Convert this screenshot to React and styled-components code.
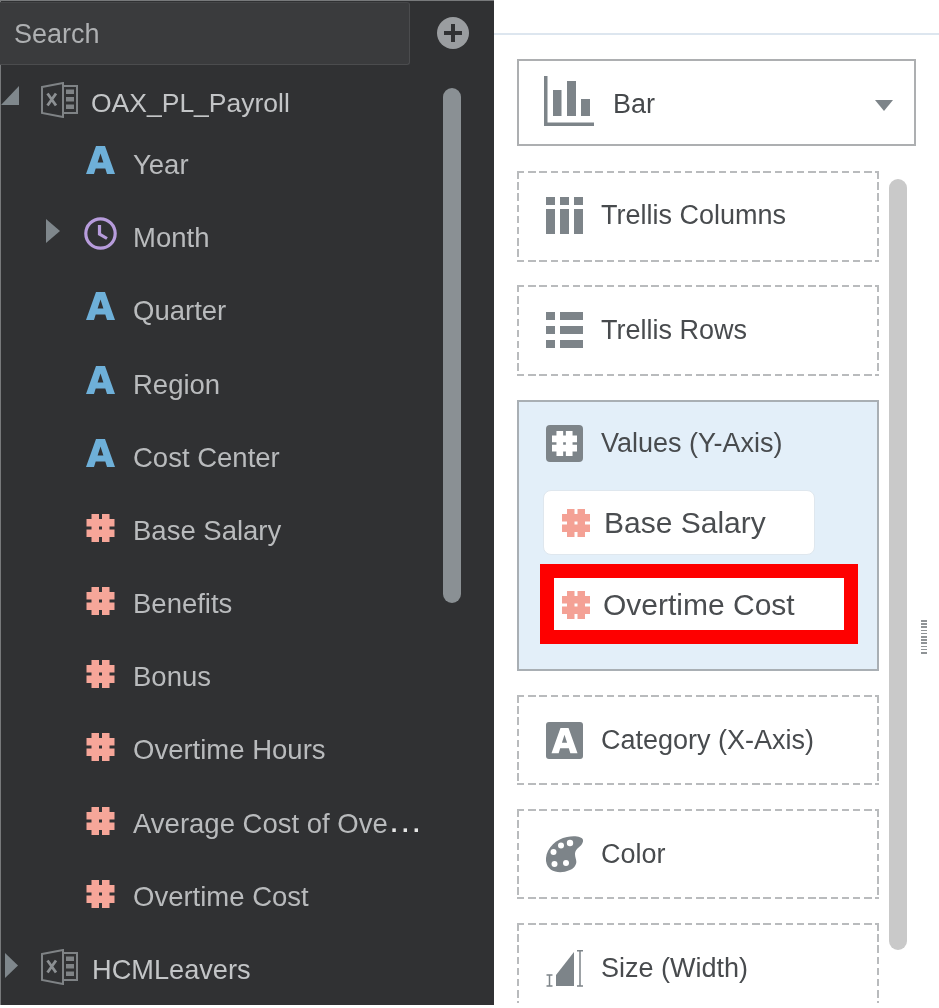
import React from "react";
import styled, { createGlobalStyle, css } from "styled-components";

const Global = createGlobalStyle`
  html, body { margin: 0; padding: 0; background: #fff; height: 100%; overflow: hidden; }
  #root { height: 100%; }
  * { box-sizing: border-box; }
`;

const Page = styled.div`
  display: flex;
  width: 939px;
  height: 1005px;
  overflow: hidden;
  background: #fff;
  font-family: "Liberation Sans", Arial, sans-serif;
  filter: blur(0.55px);
`;

/* ---------- left panel ---------- */
const DataPanel = styled.aside`
  position: relative;
  flex: 0 0 494px;
  background: #303133;
  border-top: 1px solid #77797b;
  border-left: 1px solid #77797b;
`;
const SearchRow = styled.div`
  display: flex;
  align-items: center;
  height: 63px;
  margin-top: 1px;
`;
const SearchBox = styled.div`
  flex: 0 0 410px;
  height: 63px;
  margin-left: -1px;
  padding: 2px 0 0 14px;
  display: flex;
  align-items: center;
  background: #3a3b3d;
  border: 1px solid #4b4c4e;
  border-left: 0;
  border-top-color: #444547;
  border-radius: 0 3px 3px 0;
  color: #aeb0b2;
  font-size: 27px;
`;
const AddButton = styled.svg`
  width: 32px;
  height: 32px;
  margin-left: 27px;
  margin-top: -2px;
`;
const Tree = styled.div`
  padding-top: 14.6px;
`;
const SourceRow = styled.div`
  display: flex;
  align-items: center;
  height: ${p => p.$h}px;
  padding-left: ${p => p.$inset}px;
  color: #c3c5c7;
  font-size: ${p => p.$size}px;
`;
const FieldRow = styled.div`
  display: flex;
  align-items: center;
  height: 73.2px;
  padding-left: 45px;
  color: #b9bbbd;
  font-size: 27.5px;
`;
const ToggleSlot = styled.div`
  flex: 0 0 ${p => p.$w}px;
  display: flex;
  align-items: center;
  margin-bottom: ${p => p.$lift || 0}px;
`;
const Toggle = styled.svg`
  display: block;
  fill: #7f878c;
`;
const SourceIcon = styled.svg`
  flex: 0 0 37px;
  height: 36px;
  margin-right: ${p => p.$gap}px;
  margin-bottom: 7px;
`;
const AttributeIcon = styled.svg`
  flex: 0 0 29px;
  height: 28px;
  margin-right: 18px;
  margin-bottom: 10px;
`;
const TimeIcon = styled.svg`
  flex: 0 0 33px;
  height: 33px;
  margin: 0 16px 10px -2px;
`;
const MeasureIcon = styled.svg`
  flex: 0 0 29px;
  height: 28px;
  margin-right: 18px;
  margin-bottom: 6px;
`;
const Dots = styled.span`
  letter-spacing: 4.5px;
  color: #e6e6e6;
  font-weight: 700;
  font-size: 24px;
  margin-left: 3px;
`;
const DarkScroll = styled.div`
  position: absolute;
  left: 442px;
  top: 87px;
  width: 18px;
  height: 515px;
  border-radius: 9px;
  background: #8a9094;
`;

/* ---------- right panel ---------- */
const BuilderPanel = styled.main`
  position: relative;
  flex: 1;
  overflow: hidden;
  height: 1003px;
`;
const TopBar = styled.div`
  height: 35px;
  border-bottom: 2px solid #dde6ef;
`;
const Builder = styled.div`
  padding: 24px 0 0 23px;
`;
const ChartSelect = styled.div`
  display: flex;
  align-items: center;
  width: 399px;
  height: 87px;
  padding: 0 21px 0 25px;
  border: 2px solid #adafb1;
  color: #45484b;
  font-size: 27px;
`;
const BarGlyph = styled.svg`
  flex: none;
  margin-bottom: 3px;
`;
const ChartName = styled.span`
  flex: 1;
  margin: 4px 0 0 19px;
`;
const Caret = styled.svg`
  flex: none;
  margin-top: 6px;
`;
const Wells = styled.div`
  display: flex;
  flex-direction: column;
  width: 362px;
  margin-top: 25px;
`;
const DASH = "#b9bbbd";
const dashed = css`
  background-image:
    repeating-linear-gradient(to right, ${DASH} 0 7.5px, transparent 7.5px 11.2px),
    repeating-linear-gradient(to right, ${DASH} 0 7.5px, transparent 7.5px 11.2px),
    repeating-linear-gradient(to bottom, ${DASH} 0 7.5px, transparent 7.5px 11.2px),
    repeating-linear-gradient(to bottom, ${DASH} 0 7.5px, transparent 7.5px 11.2px);
  background-size: 100% 2px, 100% 2px, 2px 100%, 2px 100%;
  background-position: 0 0, 0 100%, 0 0, 100% 0;
  background-repeat: no-repeat;
`;
const Well = styled.section`
  ${dashed}
  height: ${p => p.$h}px;
  margin-bottom: ${p => p.$gap}px;
  flex: none;
  padding: 0 0 ${p => p.$nudge || 0}px 29px;
  display: flex;
  align-items: center;
  color: #484b4e;
  font-size: 27px;
`;
const ValuesWell = styled.section`
  flex: none;
  height: 271px;
  margin-bottom: 24px;
  background: #e3eff9;
  border: 2px solid #a9afb4;
  padding: 0 0 0 21px;
  color: #484b4e;
  font-size: 27px;
`;
const WellHeader = styled.div`
  display: flex;
  align-items: center;
  height: 88px;
  padding: 0 0 6px 6px;
`;
const WellIcon = styled.svg`
  flex: 0 0 37px;
  height: 37px;
  margin-right: 18px;
`;
const Pill = styled.div`
  display: flex;
  align-items: center;
  background: #fff;
  color: #4a4d50;
  font-size: 30px;
  width: ${p => (p.$marked ? 318 : 272)}px;
  height: ${p => (p.$marked ? 80 : 65)}px;
  margin-left: ${p => (p.$marked ? 0 : 3)}px;
  margin-bottom: 9px;
  padding: ${p => (p.$marked ? "2px 0 0 8px" : "0 0 0 18px")};
  border-radius: ${p => (p.$marked ? 0 : 8)}px;
  border: ${p => (p.$marked ? "14px solid #fe0000" : "1px solid #dfe7ee")};
`;
const PillIcon = styled.svg`
  flex: 0 0 28px;
  height: 28px;
  margin-right: ${p => (p.$marked ? 13 : 14)}px;
`;
const LightScroll = styled.div`
  position: absolute;
  left: 395px;
  top: 179px;
  width: 18px;
  height: 771px;
  border-radius: 9px;
  background: #c9c9c9;
`;
const Splitter = styled.div`
  position: absolute;
  left: 427px;
  top: 620px;
  width: 6px;
  height: 35px;
  background: repeating-linear-gradient(to bottom, #8f9396 0 1.5px, transparent 1.5px 3.2px);
`;

/* ---------- icons ---------- */
const SLATE = "#7d8489";
const HASH =
  "M5 0h7.500v5h3V0H23v5h5v7.500h-5v3h5V23h-5v5h-7.500v-5h-3v5H5v-5H0v-7.500h5v-3H0V5h5zM12.500 12.500v3h3v-3z";
const A_MARK = "M10 0h9l10 28h-8l-1.700-5.500H9.700L8 28H0zM14.500 7.500L11.600 16.500h5.800z";

const Hash = ({ as: As = MeasureIcon, color = "#f6a699", ...rest }) => (
  <As viewBox="0 0 28 28" {...rest}>
    <path fill={color} fillRule="evenodd" d={HASH} />
  </As>
);

const LetterA = () => (
  <AttributeIcon viewBox="0 0 29 28">
    <path fill="#6eb0d9" fillRule="evenodd" d={A_MARK} />
  </AttributeIcon>
);

const Clock = () => (
  <TimeIcon viewBox="0 0 33 33">
    <circle cx="16.500" cy="16.500" r="14.700" fill="none" stroke="#b79cdc" strokeWidth="3.200" />
    <path d="M15.500 8v9l7.500 4.500" fill="none" stroke="#b79cdc" strokeWidth="3.200" />
  </TimeIcon>
);

const Excel = ({ gap }) => (
  <SourceIcon $gap={gap} viewBox="0 0 37 36">
    <g fill="none" stroke="#7f8386" strokeWidth="2">
      <path d="M1 5 L22 1 V35 L1 31 Z" />
      <path d="M22 4h14v27H22" />
    </g>
    <path d="M6.500 11.500 L15 23.500 M15 11.500 L6.500 23.500" stroke="#8c9093" strokeWidth="2.800" fill="none" />
    <path d="M25 7.500h8v4.500h-8zM25 15h8v4.500h-8zM25 22.500h8V27h-8z" fill="#7f8386" />
  </SourceIcon>
);

const Collapsed = ({ w = 14, h = 24 }) => (
  <Toggle width={w} height={h} viewBox="0 0 14 24" preserveAspectRatio="none">
    <polygon points="0,0 14,12 0,24" />
  </Toggle>
);

const Expanded = () => (
  <Toggle width="18" height="19" viewBox="0 0 18 20" preserveAspectRatio="none">
    <polygon points="18,0 18,20 0,20" />
  </Toggle>
);

const Field = ({ kind, name, collapsed, clipped }) => (
  <FieldRow>
    <ToggleSlot $w={40} $lift={14}>{collapsed && <Collapsed />}</ToggleSlot>
    {kind === "a" && <LetterA />}
    {kind === "t" && <Clock />}
    {kind === "n" && <Hash />}
    <span>{name}</span>
    {clipped && <Dots>...</Dots>}
  </FieldRow>
);

const TrellisCols = () => (
  <WellIcon viewBox="0 0 37 37">
    <path fill={SLATE} d="M0 0h9v8H0zM14 0h9v8h-9zM28 0h9v8h-9zM0 12h9v25H0zM14 12h9v25h-9zM28 12h9v25h-9z" />
  </WellIcon>
);
const TrellisRows = () => (
  <WellIcon viewBox="0 0 37 37">
    <path fill={SLATE} d="M0 0h9v8H0zM14 0h23v8H14zM0 14h9v8H0zM14 14h23v8H14zM0 28h9v8H0zM14 28h23v8H14z" />
  </WellIcon>
);
const ValuesIcon = () => (
  <WellIcon viewBox="0 0 37 37">
    <rect width="37" height="37" rx="4" fill={SLATE} />
    <path transform="translate(6 6) scale(0.893)" fill="#fff" fillRule="evenodd" d={HASH} />
  </WellIcon>
);
const CategoryIcon = () => (
  <WellIcon viewBox="0 0 37 37">
    <rect width="37" height="37" rx="3" fill={SLATE} />
    <path transform="translate(5.500 6) scale(0.897 0.9)" fill="#fff" fillRule="evenodd" d={A_MARK} />
  </WellIcon>
);
const PaletteIcon = () => (
  <WellIcon viewBox="0 0 37 37">
    <path
      fill={SLATE}
      d="M0 25C-1 14 9 3 21 1C29 -.5 38 .5 37 5.500C36 11 29 12 29 18C29 23 32 25 29 30C25 37 2 41 0 25Z"
    />
    <g fill="#fff">
      <circle cx="15" cy="9.500" r="3" />
      <circle cx="24" cy="7" r="3.200" />
      <circle cx="7.500" cy="16" r="3" />
      <circle cx="8.500" cy="28" r="3" />
      <circle cx="20" cy="27" r="3" />
    </g>
  </WellIcon>
);
const SizeIcon = () => (
  <WellIcon viewBox="0 0 37 37">
    <path fill={SLATE} d="M10 36V25L28 2V36Z" />
    <path fill="none" stroke={SLATE} strokeWidth="1.500" d="M.5 25h6M3.500 25v11M.5 36h6M31 .8h6M34 .8v35M31 36h6" />
  </WellIcon>
);

const fields = [
  { kind: "a", name: "Year" },
  { kind: "t", name: "Month", collapsed: true },
  { kind: "a", name: "Quarter" },
  { kind: "a", name: "Region" },
  { kind: "a", name: "Cost Center" },
  { kind: "n", name: "Base Salary" },
  { kind: "n", name: "Benefits" },
  { kind: "n", name: "Bonus" },
  { kind: "n", name: "Overtime Hours" },
  { kind: "n", name: "Average Cost of Ove", clipped: true },
  { kind: "n", name: "Overtime Cost" },
];

export default function App() {
  return (
    <>
      <Global />
      <Page>
        <DataPanel>
          <SearchRow>
            <SearchBox>Search</SearchBox>
            <AddButton viewBox="0 0 32 32">
              <circle cx="16" cy="16" r="16" fill="#9a9da0" />
              <path d="M16 7v18M7 16h18" stroke="#303133" strokeWidth="4" />
            </AddButton>
          </SearchRow>
          <Tree>
            <SourceRow $h={48.8} $inset={0} $size={26.5}>
              <ToggleSlot $w={40} $lift={17}><Expanded /></ToggleSlot>
              <Excel gap={13} />
              <span>OAX_PL_Payroll</span>
            </SourceRow>
            {fields.map(f => <Field key={f.name} {...f} />)}
            <SourceRow $h={73.2} $inset={4} $size={27.2}>
              <ToggleSlot $w={36} $lift={9}><Collapsed w={13} h={25} /></ToggleSlot>
              <Excel gap={14} />
              <span>HCMLeavers</span>
            </SourceRow>
          </Tree>
          <DarkScroll />
        </DataPanel>
        <BuilderPanel>
          <TopBar />
          <Builder>
            <ChartSelect>
              <BarGlyph width="50" height="50" viewBox="0 0 50 50">
                <path fill={SLATE} d="M0 0h3.500v46.500H50V50H0zM9 14h8.500v26H9zM23 5h9v35h-9zM37 23h9v17h-9z" />
              </BarGlyph>
              <ChartName>Bar</ChartName>
              <Caret width="18" height="11" viewBox="0 0 18 11">
                <polygon points="0,0 18,0 9,11" fill={SLATE} />
              </Caret>
            </ChartSelect>
            <Wells>
              <Well $h={91} $gap={23} $nudge={2}><TrellisCols />Trellis Columns</Well>
              <Well $h={91} $gap={24}><TrellisRows />Trellis Rows</Well>
              <ValuesWell>
                <WellHeader><ValuesIcon />Values (Y-Axis)</WellHeader>
                <Pill><Hash as={PillIcon} color="#f4a195" />Base Salary</Pill>
                <Pill $marked><Hash as={PillIcon} $marked color="#f4a195" />Overtime Cost</Pill>
              </ValuesWell>
              <Well $h={90} $gap={24}><CategoryIcon />Category (X-Axis)</Well>
              <Well $h={90} $gap={24}><PaletteIcon />Color</Well>
              <Well $h={90} $gap={0}><SizeIcon />Size (Width)</Well>
            </Wells>
          </Builder>
          <LightScroll />
          <Splitter />
        </BuilderPanel>
      </Page>
    </>
  );
}
